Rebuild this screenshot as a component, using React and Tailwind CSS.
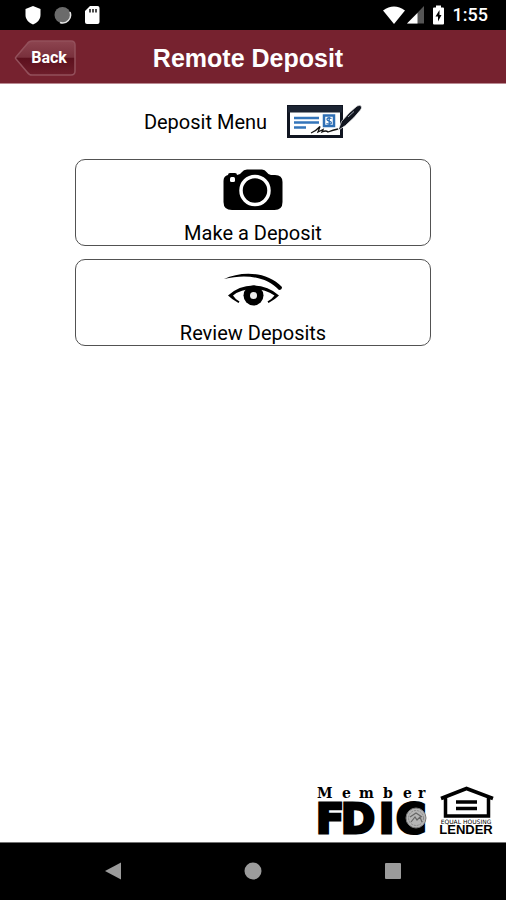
import React from "react";

function StatusBar() {
  return (
    <div className="h-[30px] bg-black flex items-center justify-between pl-6 pr-[18px]">
      <div className="flex items-center gap-3">
        <svg width="18" height="20" viewBox="0 0 18 20" fill="#fff">
          <path d="M9 1 L16.500 4 V10 C16.500 14.500 13 18 9 19.500 C5 18 1.500 14.500 1.500 10 V4 Z" />
        </svg>
        <svg width="18" height="20" viewBox="0 0 18 20">
          <circle cx="8.500" cy="10" r="8" fill="#6b6b6b" />
          <path d="M16 7 A8 8 0 0 1 6 17.500" fill="none" stroke="#e5e5e5" strokeWidth="1.500" />
        </svg>
        <svg width="16" height="20" viewBox="0 0 16 20">
          <path d="M6 1 H13.500 Q15.500 1 15.500 3 V17 Q15.500 19 13.500 19 H3 Q1 19 1 17 V6 Z" fill="#fff" />
          <path d="M6 4 V7.500 M9 4 V7.500 M12 4 V7.500" stroke="#111" strokeWidth="1.500" />
        </svg>
      </div>

      <div className="flex items-center gap-2">
        <div className="flex items-center gap-0.5">
          <svg width="22" height="18" viewBox="0 0 22 18" fill="#fff">
            <path d="M0 4.500 Q11 -3.500 22 4.500 L11 18 Z" />
          </svg>
          <svg width="17" height="18" viewBox="0 0 17 18">
            <path d="M0 17.500 L17 0 V17.500 Z" fill="#555" />
            <path d="M0 17.500 L10.500 7 V17.500 Z" fill="#fff" />
          </svg>
        </div>
        <svg width="13" height="20" viewBox="0 0 13 20">
          <path d="M4 0.500 H9 V2.500 H11 Q12 2.500 12 3.500 V18.500 Q12 19.500 11 19.500 H2 Q1 19.500 1 18.500 V3.500 Q1 2.500 2 2.500 H4 Z" fill="#fff" />
          <path d="M7.500 5 L3.500 11.500 H6 V16.500 L9.500 10 H7.500 Z" fill="#000" />
        </svg>
        <span className="text-white text-lg font-medium leading-5">1:55</span>
      </div>
    </div>
  );
}

function Header() {
  return (
    <header className="h-[54px] bg-[#76222f] border-b border-[#b98a92] grid grid-cols-[1fr_auto_1fr] items-center pl-[14px] pr-6 pt-0.5">
      <button className="relative justify-self-start w-[62px] h-9 text-white text-base font-bold cursor-pointer">
        <svg width="62" height="36" viewBox="0 0 62 36" className="absolute inset-0">
          <defs>
            <linearGradient id="backFill" x1="0" y1="0" x2="0" y2="1">
              <stop offset="0" stopColor="#8d4550" />
              <stop offset="0.480" stopColor="#79303c" />
              <stop offset="0.500" stopColor="#5c101d" />
              <stop offset="1" stopColor="#6e1e2b" />
            </linearGradient>
          </defs>
          <path
            d="M18 1 H57 Q61 1 61 5 V31 Q61 35 57 35 H18 Q15 35 13 32 L2 19 Q1 18 2 17 L13 4 Q15 1 18 1 Z"
            fill="url(#backFill)"
            stroke="#93505b"
            strokeWidth="1.500"
          />
        </svg>
        <span className="relative pl-2">Back</span>
      </button>
      <h1 className="text-white text-[25px] leading-8 font-bold font-['Liberation_Sans',sans-serif]">Remote Deposit</h1>
      <div />
    </header>
  );
}

function CheckIcon() {
  return (
    <svg width="75" height="34" viewBox="0 0 75 34">
      <rect x="1.500" y="1.500" width="53" height="30" fill="#fff" stroke="#101521" strokeWidth="3" />
      <rect x="1" y="1" width="54" height="6.500" fill="#1c2433" />
      <path d="M7 13 H32 M7 17.500 H32 M7 22.500 H19" stroke="#3475ba" strokeWidth="2.500" />
      <rect x="37" y="10.500" width="10" height="10.500" fill="#fff" stroke="#2f6fb5" strokeWidth="2.500" />
      <path d="M44.500 13.500 Q40 12 40 14.500 C40 16.500 44.500 15.500 44.500 18 Q43.500 20 39.500 18.500 M42.200 12 V20" fill="none" stroke="#2f6fb5" strokeWidth="1.300" />
      <path d="M24 28 Q29 26 33 21.500 L31 27 L36 24.500 L35 27 Q39 25 41 27 Q46 25 51 24" fill="none" stroke="#111" strokeWidth="1.300" />
      <path d="M51 25.500 L54.500 16.500 L62 8 L70 1 Q73 -0.500 74.500 1.500 Q75 3 73.500 5 L67 12.500 L58.500 20.500 Z" fill="#11151f" stroke="#fff" strokeWidth="0.700" />
      <path d="M61 12 L67 6.500" stroke="#9ca3af" strokeWidth="1" />
    </svg>
  );
}

function CameraIcon() {
  return (
    <svg width="60" height="42" viewBox="0 0 60 42">
      <path d="M0.500 12 Q0.500 7 5 6 Q5 4 7 4 H12 Q14 4 14 6 Q17 6 19 3 Q20.500 0.500 24 0.500 H39 Q42 0.500 43.500 3 Q45.500 6 48 6 H52 Q59.500 6 59.500 13 V33 Q59.500 41 51.500 41 H9 Q0.500 41 0.500 33 Z" fill="#000" />
      <circle cx="32" cy="21.500" r="14" fill="none" stroke="#fff" strokeWidth="3.500" />
      <rect x="7" y="8" width="5" height="5" rx="1.500" fill="#fff" />
    </svg>
  );
}

function EyeIcon() {
  return (
    <svg width="60" height="38" viewBox="0 -4 60 38">
      <path d="M1 6 C18 -2 44 -2 59 14 Q59 17 56 17 C43 3 22 1 1 6 Z" fill="#000" />
      <path d="M5 22.500 Q16 12.500 30 12.500 Q45 12.500 56 22.500 Q52 26.500 45.500 30 L44.500 28.500 Q49 26 51.500 22.500 Q42 16 30 16 Q18 16 10 22.500 Q12 26 16.500 28.500 L15.500 30 Q9 26.500 5 22.500 Z" fill="#000" />
      <circle cx="30.500" cy="22.500" r="10" fill="#000" />
      <circle cx="30.500" cy="22.500" r="3.500" fill="#eee" />
    </svg>
  );
}

function MenuButton({ icon, label }) {
  return (
    <button className="w-full h-[87px] bg-white border border-neutral-600 rounded-[10px] flex flex-col items-center justify-between pt-[9px] cursor-pointer hover:bg-gray-50">
      {icon}
      <span className="text-xl leading-6">{label}</span>
    </button>
  );
}

function FdicLogo() {
  const member = [["M", 1], ["e", 26], ["m", 43], ["b", 67], ["e", 87], ["r", 102]];
  const fdic = [["F", 0], ["D", 25], ["I", 63], ["C", 80]];

  return (
    <svg width="112" height="50" viewBox="0 0 112 50" role="img" aria-label="Member FDIC" className="overflow-visible">
      <text y="12" fontSize="14" fontWeight="bold" fontFamily="DejaVu Serif, serif">
        {member.map(([letter, x], i) => (
          <tspan key={i} x={x}>{letter}</tspan>
        ))}
      </text>
      <text y="47" fontSize="41" fontWeight="bold" fontFamily="DejaVu Sans, sans-serif" stroke="#000" strokeWidth="3">
        {fdic.map(([letter, x], i) => (
          <tspan key={i} x={x}>{letter}</tspan>
        ))}
      </text>
      <circle cx="100" cy="32" r="10" fill="#b5b5b5" stroke="#777" strokeWidth="1" />
      <circle cx="100" cy="32" r="7.500" fill="none" stroke="#888" strokeWidth="1" strokeDasharray="2 1" />
      <path d="M94 31 L100 27 L106 31 M95 36 L99 31 L101 34 L104 31 L106 36" fill="none" stroke="#666" strokeWidth="1.200" />
    </svg>
  );
}

function LenderLogo() {
  return (
    <svg width="56" height="50" viewBox="0 0 56 50" role="img" aria-label="Equal Housing Lender" className="overflow-visible">
      <path d="M3 12.500 L28.500 2.500 L55 12.500 M7.500 11 V30 H50.500 V11" fill="none" stroke="#000" strokeWidth="3.500" />
      <path d="M18 16 H39 M18 22.500 H39" stroke="#000" strokeWidth="3.500" />
      <text x="28" y="38" textAnchor="middle" fontSize="6" fontFamily="DejaVu Sans, sans-serif">EQUAL HOUSING</text>
      <text x="28" y="48" textAnchor="middle" fontSize="13" fontWeight="bold" fontFamily="Liberation Sans, sans-serif">LENDER</text>
    </svg>
  );
}

function NavBar() {
  return (
    <nav className="h-[58px] bg-black border-t border-neutral-500 flex items-center justify-center gap-[116px]">
      <button aria-label="Back" className="cursor-pointer">
        <svg width="24" height="20" viewBox="0 0 24 20" fill="#9b9b9b">
          <path d="M4 9 L20 0.500 V17.500 Z" />
        </svg>
      </button>
      <button aria-label="Home" className="cursor-pointer">
        <svg width="24" height="20" viewBox="0 0 24 20" fill="#9b9b9b">
          <circle cx="12" cy="9" r="8.500" />
        </svg>
      </button>
      <button aria-label="Recent apps" className="cursor-pointer">
        <svg width="24" height="20" viewBox="0 0 24 20" fill="#9b9b9b">
          <rect x="4" y="1" width="16" height="16" rx="1" />
        </svg>
      </button>
    </nav>
  );
}

export default function App() {
  return (
    <div className="min-h-screen bg-white text-black flex flex-col font-['Roboto',sans-serif]">
      <StatusBar />
      <Header />

      <main className="flex-1 flex flex-col px-[75px] pt-[21px]">
        <div className="flex items-center justify-center gap-5">
          <h2 className="text-xl">Deposit Menu</h2>
          <CheckIcon />
        </div>
        <div className="mt-5 flex flex-col gap-[13px]">
          <MenuButton icon={<CameraIcon />} label="Make a Deposit" />
          <MenuButton icon={<EyeIcon />} label="Review Deposits" />
        </div>
      </main>

      <footer className="flex justify-end items-end gap-[10px] pr-3 pb-[6px]">
        <FdicLogo />
        <LenderLogo />
      </footer>
      <NavBar />
    </div>
  );
}
